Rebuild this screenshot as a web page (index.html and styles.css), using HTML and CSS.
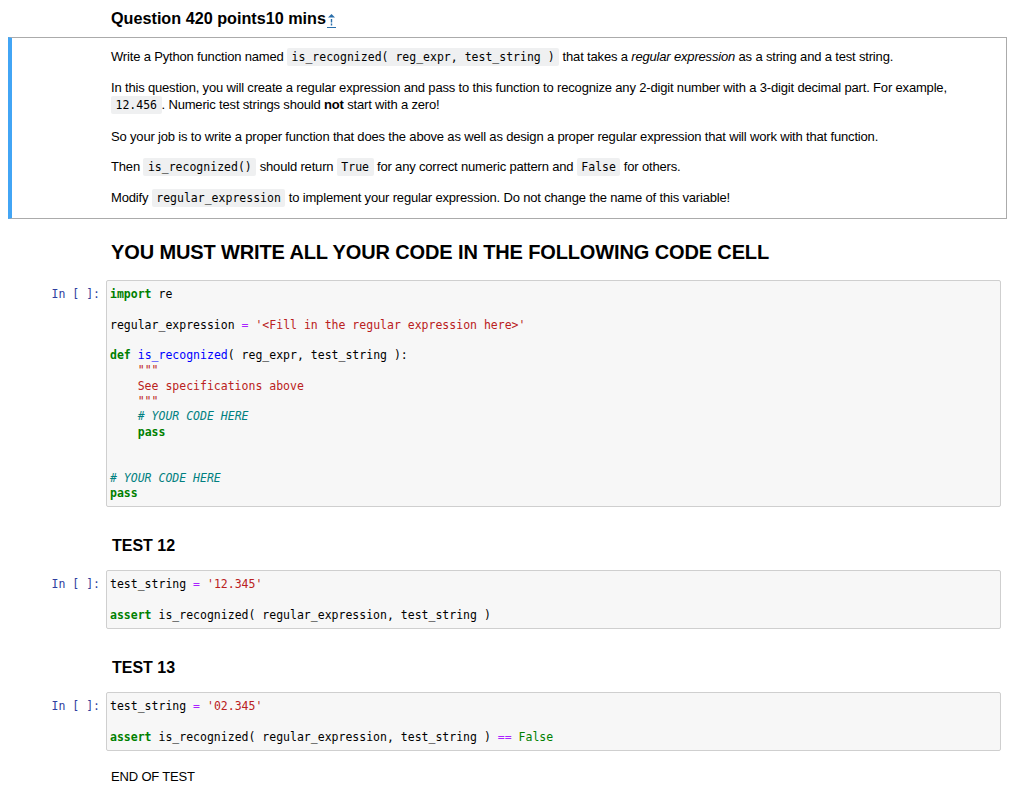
FILE: index.html
```html
<!DOCTYPE html>
<html lang="en">
<head>
    <meta charset="UTF-8">
    <title>Question 4</title>
    <link rel="stylesheet" href="styles.css">
</head>
<body>
    <div class="notebook">
        <h3 class="question_title">Question 420 points10 mins<a class="anchor" href="#"><svg width="9" height="15" viewBox="0 0 9 15"><path d="M4.5 1 L8 4.5 H1 Z" fill="#296eaa"/><path d="M3.8 6 H5.2 V9.5 H3.8 Z M3.8 10.5 H5.2 V12.5 H3.8 Z" fill="#296eaa"/><path d="M0 14.5 H9" stroke="#296eaa"/></svg></a></h3>

        <div class="question_box">
            <p>Write a Python function named <code>is_recognized( reg_expr, test_string )</code> that takes a <em>regular expression</em> as a string and a test string.</p>
            <p>In this question, you will create a regular expression and pass to this function to recognize any 2-digit number with a 3-digit decimal part. For example, <code>12.456</code>. Numeric test strings should <strong>not</strong> start with a zero!</p>
            <p>So your job is to write a proper function that does the above as well as design a proper regular expression that will work with that function.</p>
            <p>Then <code>is_recognized()</code> should return <code>True</code> for any correct numeric pattern and <code>False</code> for others.</p>
            <p>Modify <code>regular_expression</code> to implement your regular expression. Do not change the name of this variable!</p>
        </div>

        <h2 class="big_title">YOU MUST WRITE ALL YOUR CODE IN THE FOLLOWING CODE CELL</h2>

        <div class="cell">
            <div class="prompt">In&nbsp;[&nbsp;]:</div>
<pre class="input"><span class="kw">import</span> re

regular_expression <span class="op">=</span> <span class="str">'&lt;Fill in the regular expression here&gt;'</span>

<span class="kw">def</span> <span class="fn">is_recognized</span>( reg_expr, test_string ):
    <span class="str">"""</span>
<span class="str">    See specifications above</span>
<span class="str">    """</span>
    <span class="com"># YOUR CODE HERE</span>
    <span class="kw">pass</span>


<span class="com"># YOUR CODE HERE</span>
<span class="kw">pass</span></pre>
        </div>

        <h4 class="test_title">TEST 12</h4>

        <div class="cell">
            <div class="prompt">In&nbsp;[&nbsp;]:</div>
<pre class="input">test_string <span class="op">=</span> <span class="str">'12.345'</span>

<span class="kw">assert</span> is_recognized( regular_expression, test_string )</pre>
        </div>

        <h4 class="test_title">TEST 13</h4>

        <div class="cell">
            <div class="prompt">In&nbsp;[&nbsp;]:</div>
<pre class="input">test_string <span class="op">=</span> <span class="str">'02.345'</span>

<span class="kw">assert</span> is_recognized( regular_expression, test_string ) <span class="op">==</span> <span class="bool">False</span></pre>
        </div>

        <p class="end_text">END OF TEST</p>
    </div>
</body>
</html>
```

FILE: styles.css
```css
* {
    box-sizing: border-box;
}

html,
body {
    margin: 0;
    height: 804px;
    overflow: hidden;
    background-color: #fff;
}

body {
    font-family: "Liberation Sans", Arial, sans-serif;
    font-size: 13px;
    letter-spacing: -0.17px;
    color: #000;
}

.notebook {
    padding: 0 10px 0 8px;
}

.question_title {
    margin: 0;
    padding: 9px 0 0 103px;
    height: 37px;
    font-size: 16.2px;
    letter-spacing: 0;
    line-height: 19px;
    font-weight: bold;
}

.anchor svg {
    margin-left: 1px;
    vertical-align: -4px;
}

.question_box {
    width: 999px;
    height: 182px;
    padding: 10px 30px 0 99px;
    border: 1px solid #ababab;
    border-left: 4px solid #42a5f5;
}

.question_box p {
    margin: 0 0 13.3px 0;
    line-height: 17px;
}

code {
    font-family: "DejaVu Sans Mono", monospace;
    font-size: 11.5px;
    letter-spacing: 0;
    background-color: #eff0f1;
    padding: 2px 4.5px;
    border-radius: 2px;
}

.big_title {
    margin: 0;
    padding: 21px 0 0 103px;
    height: 61px;
    font-size: 20px;
    letter-spacing: -0.13px;
    line-height: 24px;
    font-weight: bold;
}

.cell {
    display: flex;
    width: 993px;
}

.prompt {
    width: 98px;
    flex-shrink: 0;
    padding: 7px 6px 0 0;
    text-align: right;
    color: #303f9f;
    font-family: "DejaVu Sans Mono", monospace;
    font-size: 11.5px;
    letter-spacing: 0;
    line-height: 15.3px;
}

.input {
    flex: 1;
    margin: 0;
    padding: 6px 3px 5px 3px;
    border: 1px solid #cfcfcf;
    border-radius: 2px;
    background-color: #f7f7f7;
    color: #000;
    font-family: "DejaVu Sans Mono", monospace;
    font-size: 11.5px;
    letter-spacing: 0;
    line-height: 15.3px;
}

.kw {
    color: #008000;
    font-weight: bold;
}

.bool {
    color: #008000;
}

.op {
    color: #aa22ff;
}

.str {
    color: #ba2121;
}

.fn {
    color: #0000ff;
}

.com {
    color: #008080;
    font-style: italic;
}

.test_title {
    margin: 0;
    padding: 29px 0 0 104px;
    height: 63px;
    font-size: 16px;
    letter-spacing: 0;
    line-height: 19px;
    font-weight: bold;
}

.end_text {
    margin: 0;
    padding: 17px 0 0 103px;
    line-height: 18px;
}
```
